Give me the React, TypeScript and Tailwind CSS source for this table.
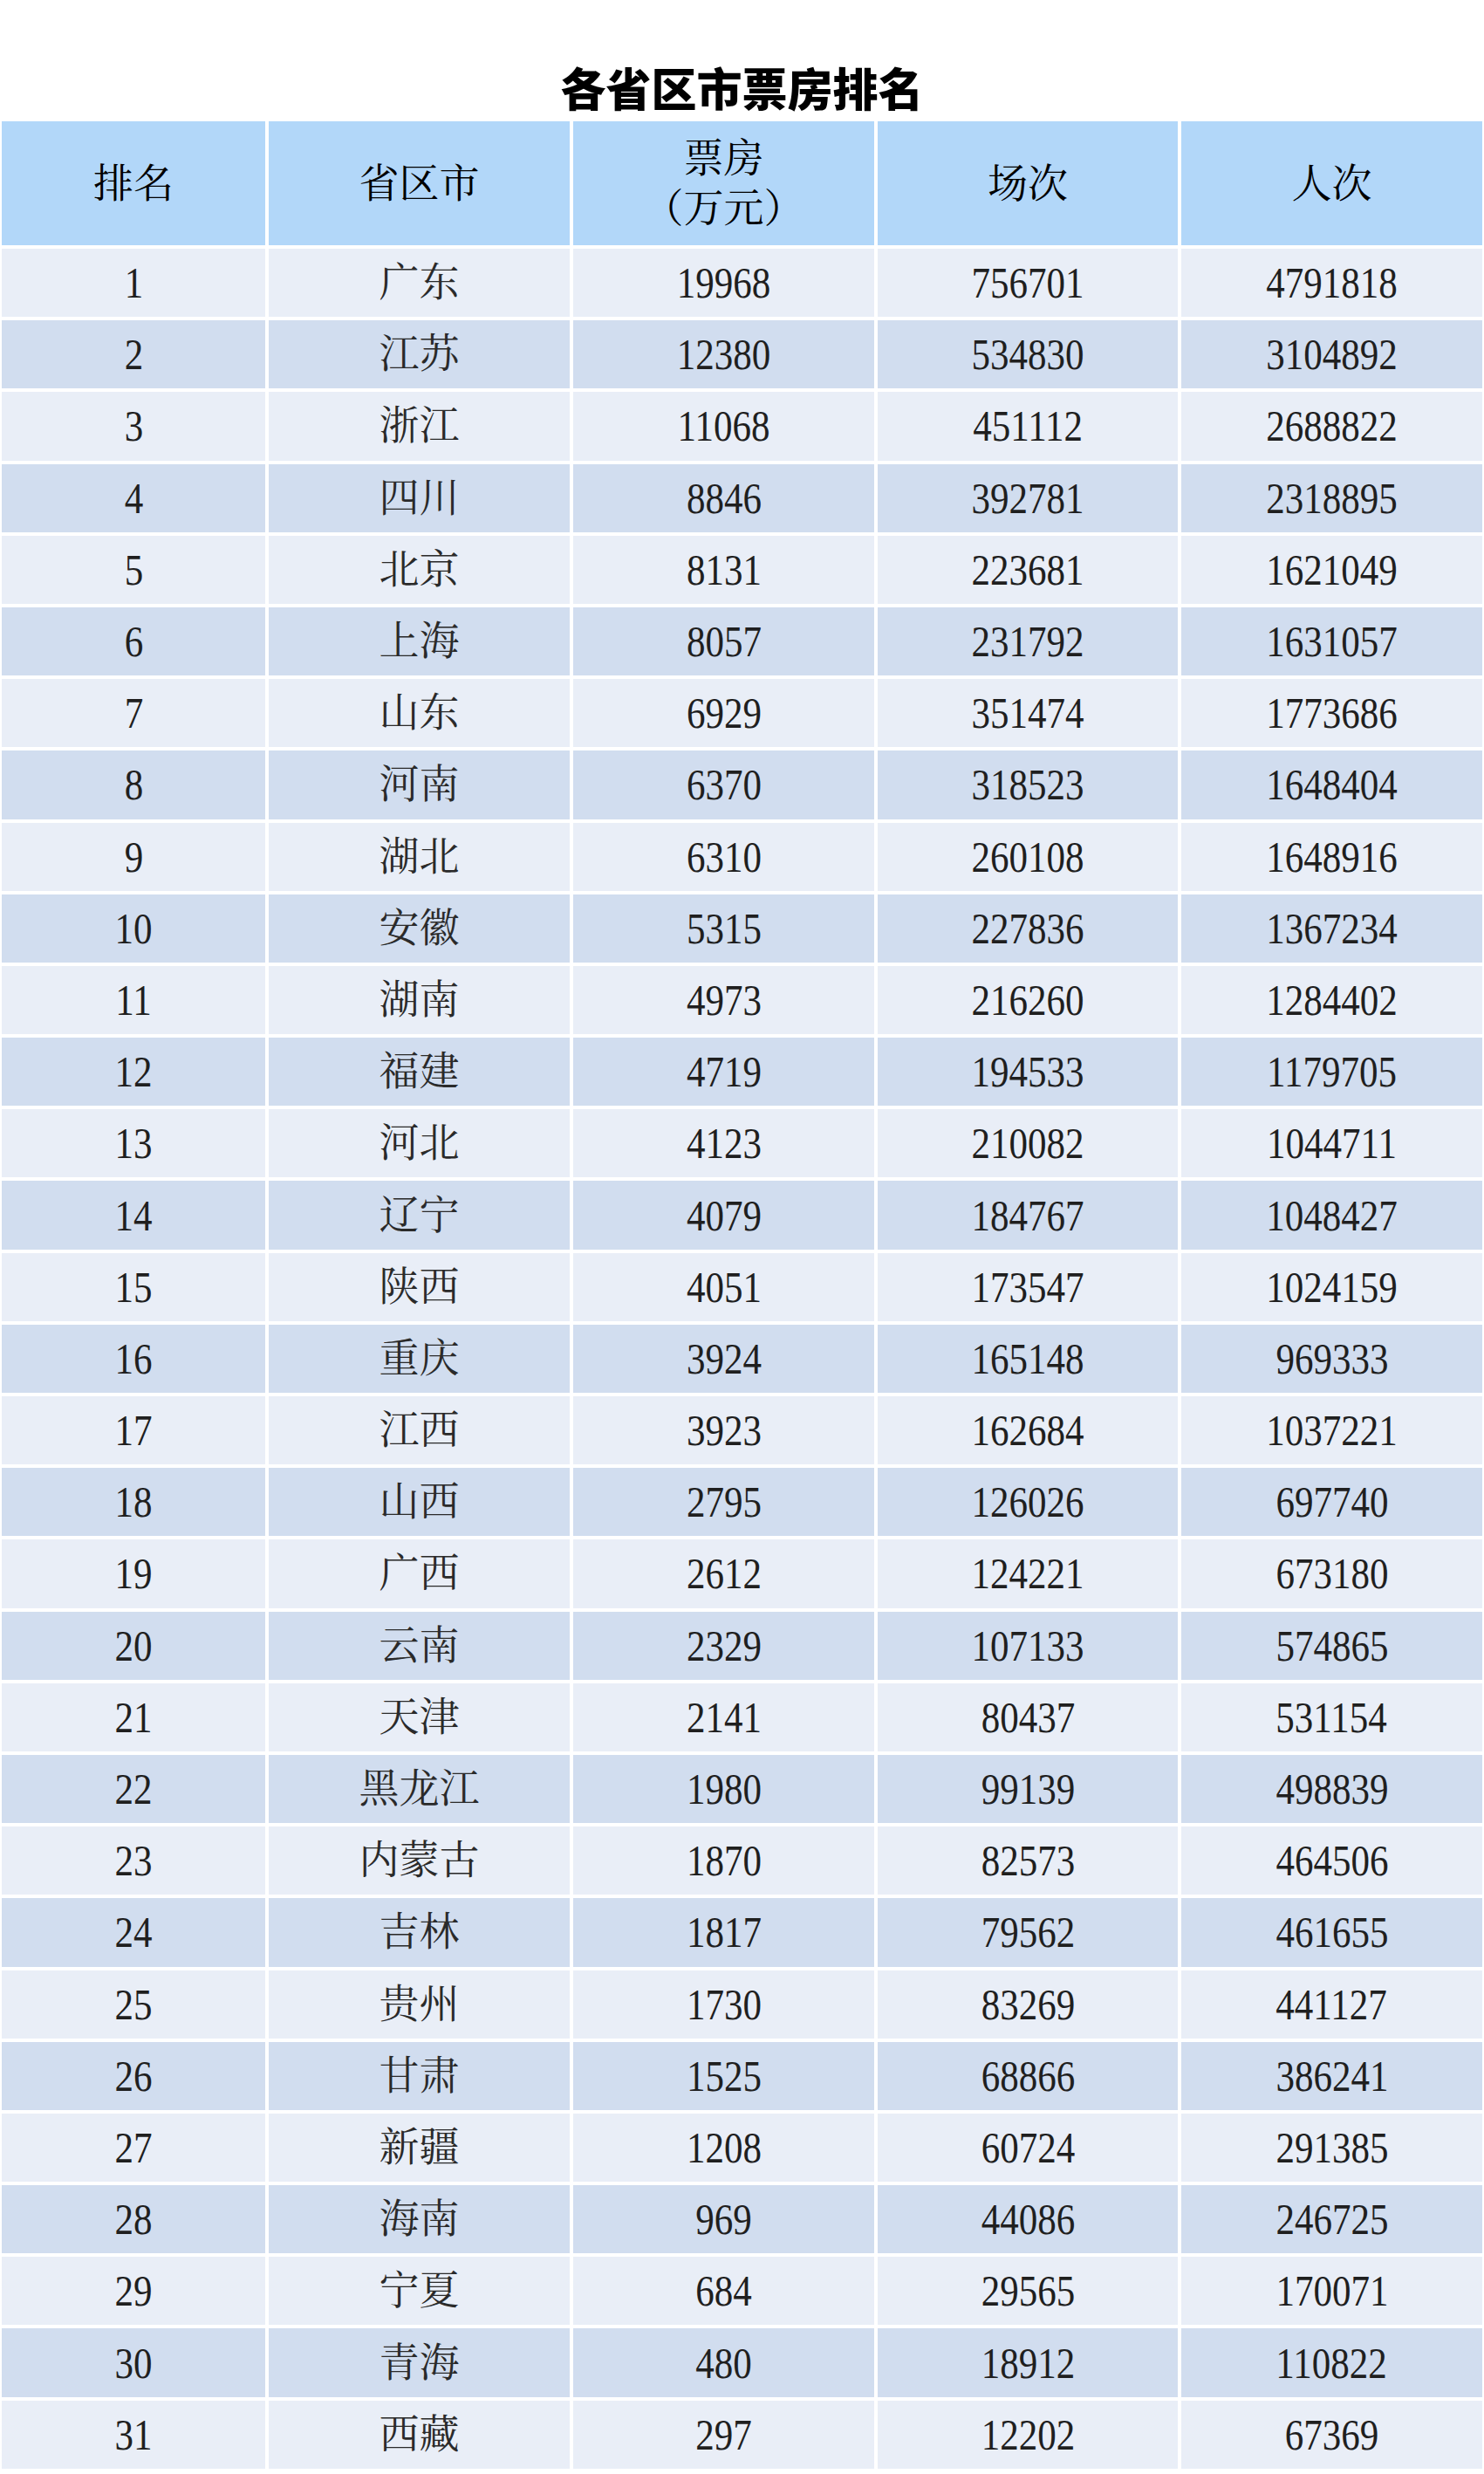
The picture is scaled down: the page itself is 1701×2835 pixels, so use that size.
import React from 'react';

const rows: [string, string, string, string][] = [
  ['广东', '19968', '756701', '4791818'],
  ['江苏', '12380', '534830', '3104892'],
  ['浙江', '11068', '451112', '2688822'],
  ['四川', '8846', '392781', '2318895'],
  ['北京', '8131', '223681', '1621049'],
  ['上海', '8057', '231792', '1631057'],
  ['山东', '6929', '351474', '1773686'],
  ['河南', '6370', '318523', '1648404'],
  ['湖北', '6310', '260108', '1648916'],
  ['安徽', '5315', '227836', '1367234'],
  ['湖南', '4973', '216260', '1284402'],
  ['福建', '4719', '194533', '1179705'],
  ['河北', '4123', '210082', '1044711'],
  ['辽宁', '4079', '184767', '1048427'],
  ['陕西', '4051', '173547', '1024159'],
  ['重庆', '3924', '165148', '969333'],
  ['江西', '3923', '162684', '1037221'],
  ['山西', '2795', '126026', '697740'],
  ['广西', '2612', '124221', '673180'],
  ['云南', '2329', '107133', '574865'],
  ['天津', '2141', '80437', '531154'],
  ['黑龙江', '1980', '99139', '498839'],
  ['内蒙古', '1870', '82573', '464506'],
  ['吉林', '1817', '79562', '461655'],
  ['贵州', '1730', '83269', '441127'],
  ['甘肃', '1525', '68866', '386241'],
  ['新疆', '1208', '60724', '291385'],
  ['海南', '969', '44086', '246725'],
  ['宁夏', '684', '29565', '170071'],
  ['青海', '480', '18912', '110822'],
  ['西藏', '297', '12202', '67369'],
];

const serif = "font-['Liberation_Serif','Noto_Serif_CJK_SC','Noto_Sans_CJK_SC',serif]";

// header cell
const Head = ({ children }: { children: React.ReactNode }) => (
  <div className={`bg-[#b2d7f9] h-[142px] flex flex-col items-center justify-center text-black text-[46px] leading-[57px] ${serif}`}>
    {children}
  </div>
);

const Cell = ({ value, dark }: { value: string; dark: boolean }) => {
  const numeric = /^\d+$/.test(value);
  return (
    <div
      className={`h-[78.2px] flex items-center justify-center text-[#1f1f1f] ${serif} ${
        dark ? 'bg-[#d1ddef]' : 'bg-[#e9eef7]'
      }`}
    >
      {numeric ? (
        <span className="text-[50px] leading-none inline-block scale-x-[0.86]">{value}</span>
      ) : (
        <span className="text-[46px] leading-none text-[#2a2a2a]">{value}</span>
      )}
    </div>
  );
};

export default function App() {
  return (
    <div className="w-[1701px] min-h-[2835px] bg-white px-[2px]">
      {/* title */}
      <div className="h-[139px] pt-[60px] flex items-center justify-center">
        <h1 className="text-[52px] leading-none font-black text-black font-['Noto_Sans_CJK_SC',sans-serif]">
          各省区市票房排名
        </h1>
      </div>

      <div className="grid grid-cols-[302px_345px_345px_344px_345px] gap-[4px]">
        <Head>排名</Head>
        <Head>省区市</Head>
        <Head>
          <span>票房</span>
          <span>（万元）</span>
        </Head>
        <Head>场次</Head>
        <Head>人次</Head>

        {rows.map((r, i) => {
          const dark = i % 2 === 1;
          return (
            <React.Fragment key={r[0]}>
              <Cell value={String(i + 1)} dark={dark} />
              <Cell value={r[0]} dark={dark} />
              <Cell value={r[1]} dark={dark} />
              <Cell value={r[2]} dark={dark} />
              <Cell value={r[3]} dark={dark} />
            </React.Fragment>
          );
        })}
      </div>
    </div>
  );
}
